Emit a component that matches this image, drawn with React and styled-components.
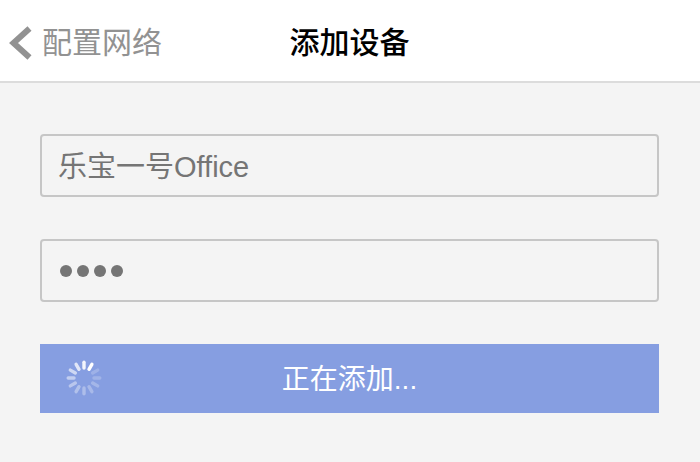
import React from 'react';
import styled, { createGlobalStyle } from 'styled-components';

const GlobalStyle = createGlobalStyle`
  html, body {
    margin: 0;
    padding: 0;
    background: #f4f4f4;
    font-family: "Liberation Sans", "Noto Sans CJK SC", sans-serif;
  }
`;

const Page = styled.div`
  width: 700px;
  height: 462px;
  overflow: hidden;
  background: #f4f4f4;
`;

const NavBar = styled.header`
  box-sizing: border-box;
  height: 83px;
  padding-top: 5px;
  display: grid;
  grid-template-columns: 1fr auto 1fr;
  align-items: center;
  background: #fff;
  border-bottom: 2px solid #dcdcdc;
`;

const BackLink = styled.div`
  display: flex;
  align-items: center;
  gap: 9px;
  padding-left: 9px;
  color: #929292;
  font-size: 30px;
  line-height: 40px;
`;

const Title = styled.h1`
  margin: 0 1px 0 0;
  color: #000;
  font-size: 30px;
  line-height: 40px;
  font-weight: 500;
`;

const Form = styled.main`
  display: flex;
  flex-direction: column;
  padding: 51px 41px 0 40px;
`;

const Field = styled.div`
  box-sizing: border-box;
  height: 63px;
  margin-bottom: 42px;
  padding: 0 18px;
  display: flex;
  align-items: center;
  gap: 5px;
  border: 2px solid #c6c6c6;
  border-radius: 4px;
  color: #757575;
  font-size: 29px;
`;

const FieldText = styled.span`
  margin: 0 0 4px -2px;
`;

const Dot = styled.span`
  width: 12px;
  height: 12px;
  border-radius: 50%;
  background: #757575;
`;

const SubmitButton = styled.div`
  position: relative;
  box-sizing: border-box;
  height: 69px;
  padding-bottom: 3px;
  display: flex;
  align-items: center;
  justify-content: center;
  background: #869ee1;
  color: #fff;
  font-size: 28px;
`;

const SpinnerWrap = styled.svg`
  position: absolute;
  left: 25px;
  top: 15px;
`;

const spokeOpacity = [0.9, 1, 0.2, 0.22, 0.25, 0.28, 0.32, 0.36, 0.42, 0.5, 0.6, 0.75];

const Spinner = () => (
  <SpinnerWrap width="38" height="38" viewBox="-19 -19 38 38">
    {spokeOpacity.map((opacity, i) => (
      <line
        key={i}
        x1="0"
        y1="-10"
        x2="0"
        y2="-15.8"
        stroke="#fff"
        strokeWidth="3.4"
        strokeLinecap="round"
        opacity={opacity}
        transform={`rotate(${i * 30})`}
      />
    ))}
  </SpinnerWrap>
);

const App = () => {
  return (
    <Page>
      <GlobalStyle />
      <NavBar>
        <BackLink>
          <svg width="24" height="38" viewBox="0 0 24 38">
            <path d="M20.5 4.5 L4.5 19 L20.5 33.5" fill="none" stroke="#929292" strokeWidth="6" />
          </svg>
          配置网络
        </BackLink>
        <Title>添加设备</Title>
        <div />
      </NavBar>
      <Form>
        <Field>
          <FieldText>乐宝一号Office</FieldText>
        </Field>
        <Field>
          <Dot />
          <Dot />
          <Dot />
          <Dot />
        </Field>
        <SubmitButton>
          <Spinner />
          正在添加...
        </SubmitButton>
      </Form>
    </Page>
  );
};

export default App;
